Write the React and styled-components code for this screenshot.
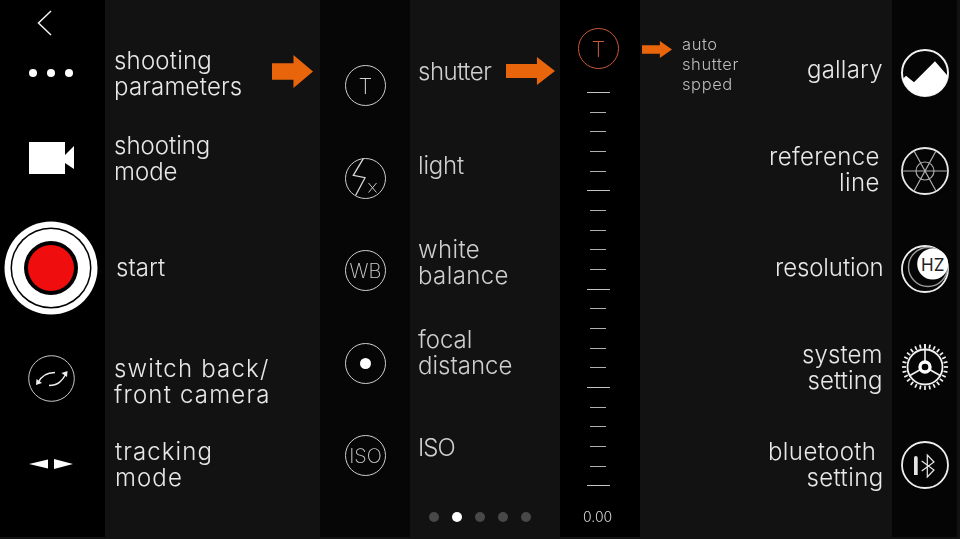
import React from 'react'
import styled, { createGlobalStyle } from 'styled-components'

const TICKS = Array.from({ length: 21 }, (_, i) => i)
const GEAR_TICKS = Array.from({ length: 28 }, (_, i) => (i * 360) / 28)

function App() {
    return (
        <Page>
            <GlobalStyle />
            <Rail $w={105} $bg={'#000'} $pad={3}>
                <Slot $h={46}><Chevron /></Slot>
                <Slot $h={54}><MoreDots /></Slot>
                <Slot $h={116}><Camera /></Slot>
                <Slot $h={104}><RecordButton /></Slot>
                <Slot $h={116}><SwitchIcon /></Slot>
                <Slot $h={56}><TrackingIcon /></Slot>
            </Rail>

            <Panel $w={215} $pad={9}>
                <Slot $h={86} $between>
                    <Label>shooting<br />parameters</Label>
                    <Arrow $w={41} $h={33} $head={22} $lift={4} $right={7} />
                </Slot>
                <Slot $h={84}><Label $track={0}>shooting<br />mode</Label></Slot>
                <Slot $h={134}><Label $indent={2} $track={0}>start</Label></Slot>
                <Slot $h={94}><Label $track={1.2}>switch back/<br />front camera</Label></Slot>
                <Slot $h={72}><Label $indent={1} $track={1.1}>tracking<br />mode</Label></Slot>
            </Panel>

            <IconRail $w={90} $bg={'#060606'} $top={65} $gap={51.5}>
                <Badge>T</Badge>
                <Badge><FlashIcon /></Badge>
                <Badge $small>WB</Badge>
                <Badge><FocusDot /></Badge>
                <Badge $small>ISO</Badge>
            </IconRail>

            <Panel $w={150} $pad={8}>
                <Slot $h={82} $between>
                    <Label $dim $track={-0.5}>shutter</Label>
                    <Arrow $w={49} $h={28} $head={26.5} $right={5} />
                </Slot>
                <Slot $h={106}><Label $dim $track={-0.2}>light</Label></Slot>
                <Slot $h={88}><Label $dim $track={0.4}>white<br />balance</Label></Slot>
                <Slot $h={92}><Label $dim $track={0}>focal<br />distance</Label></Slot>
                <Slot $h={98}><Label $dim $track={-1}>ISO</Label></Slot>
                <Pager>
                    {[0, 1, 2, 3, 4].map((i) => <PagerDot key={i} $on={i === 1} />)}
                </Pager>
            </Panel>

            <Scale>
                <Badge $orange>T</Badge>
                <Ticks>
                    {TICKS.map((i) => <Tick key={i} $long={i % 5 === 0} />)}
                </Ticks>
                <ScaleValue>0.00</ScaleValue>
            </Scale>

            <Panel $w={252} $row>
                <AutoBlock>
                    <Arrow $w={30} $h={17} $head={25} />
                    <SmallLabel>auto<br />shutter<br />spped</SmallLabel>
                </AutoBlock>
                <RightLabels>
                    <Slot $h={78}><Label $right $track={0.2}>gallary</Label></Slot>
                    <Slot $h={122}><Label $right $end={3} $track={0.4}>reference<br />line</Label></Slot>
                    <Slot $h={74}><Label $right $end={-1} $track={-0.1}>resolution</Label></Slot>
                    <Slot $h={126}><Label $right $track={0.1}>system<br />setting</Label></Slot>
                    <Slot $h={68}><Label $right $end={-1} $track={0.4}>bluetooth&nbsp;<br />setting</Label></Slot>
                </RightLabels>
            </Panel>

            <IconRail $w={65} $bg={'#050505'} $top={49} $gap={50}>
                <GalleryIcon />
                <ReferenceIcon />
                <HzIcon />
                <GearIcon />
                <BluetoothIcon />
            </IconRail>
        </Page>
    )
}

export default App

function Arrow({ $w, $h, $head, $lift, $right }) {
    return (
        <ArrowSvg viewBox="0 0 42 36" preserveAspectRatio="none" width={$w} height={$h} $lift={$lift} $right={$right}>
            <path d={`M0 9H${$head}V0L42 18L${$head} 36V27H0Z`} fill="#e8650c" />
        </ArrowSvg>
    )
}

function Chevron() {
    return (
        <ChevronSvg width="15" height="26" viewBox="0 0 15 26">
            <path d="M14 1L1.5 13L14 25" fill="none" stroke="#f2f2f2" strokeWidth="1.5" />
        </ChevronSvg>
    )
}

function MoreDots() {
    return (
        <svg width="46" height="10" viewBox="0 0 46 10">
            <circle cx="5" cy="5" r="4" fill="#fff" />
            <circle cx="23" cy="5" r="4" fill="#fff" />
            <circle cx="41" cy="5" r="4" fill="#fff" />
        </svg>
    )
}

function Camera() {
    return (
        <svg width="48" height="32" viewBox="-2 0 48 32">
            <rect x="0" y="0" width="36" height="32" fill="#fff" />
            <path d="M36 13L45 4V27L36 21Z" fill="#fff" />
        </svg>
    )
}

function SwitchIcon() {
    return (
        <svg width="47" height="47" viewBox="0 0 47 47">
            <circle cx="23.5" cy="23.5" r="22.8" fill="none" stroke="#c8c8c8" strokeWidth="1" />
            <path d="M10 28C13 21 18 17.5 27 17.5M21 30.5C30 30.5 34 26 38 19" fill="none" stroke="#eee" strokeWidth="1.5" />
            <path d="M8 30L8.5 24L14 28Z" fill="#eee" />
            <path d="M39.5 16L33.5 18L39 22Z" fill="#eee" />
        </svg>
    )
}

function TrackingIcon() {
    return (
        <svg width="44" height="10" viewBox="0 0 44 10">
            <path d="M0 5L19 0.5V9.5Z" fill="#fff" />
            <path d="M25 0V10L44 5Z" fill="#fff" />
        </svg>
    )
}

function FlashIcon() {
    return (
        <IconSvg width="41" height="41" viewBox="0 0 41 41">
            <path d="M18.3 0.7L8.3 17.3L20 19.7L10.7 37.3" fill="none" stroke="#d8d8d8" strokeWidth="1.3" />
            <path d="M23.5 25L31.5 34.5M31.5 25L23.5 34.5" fill="none" stroke="#c8c8c8" strokeWidth="1" />
        </IconSvg>
    )
}

function GalleryIcon() {
    return (
        <svg width="48" height="48" viewBox="0 0 48 48">
            <circle cx="24" cy="24" r="23" fill="none" stroke="#f2f2f2" strokeWidth="2" />
            <path d="M1.8 30L5 26.7L13 33.3L34 12.3L46.8 27A23 23 0 0 1 1.8 30Z" fill="#fff" />
        </svg>
    )
}

function ReferenceIcon() {
    return (
        <svg width="48" height="48" viewBox="0 0 48 48">
            <circle cx="24" cy="24" r="23" fill="none" stroke="#e8e8e8" strokeWidth="1.8" />
            <circle cx="24" cy="24" r="9" fill="none" stroke="#a8a8a8" strokeWidth="1.2" />
            <path d="M1 24H47M13 4L35 44M35 4L13 44" fill="none" stroke="#b0b0b0" strokeWidth="1.2" />
        </svg>
    )
}

function HzIcon() {
    return (
        <svg width="48" height="48" viewBox="0 0 48 48">
            <circle cx="24" cy="24" r="23" fill="none" stroke="#eee" strokeWidth="1.8" />
            <circle cx="27" cy="22" r="19.5" fill="none" stroke="#9a9a9a" strokeWidth="1.4" />
            <circle cx="31.7" cy="19" r="15.5" fill="#fff" />
            <HzText x="31.7" y="25.5" textAnchor="middle">HZ</HzText>
        </svg>
    )
}

function GearIcon() {
    return (
        <svg width="48" height="48" viewBox="0 0 48 48">
            {GEAR_TICKS.map((a) => (
                <path key={a} d="M24 1V5" stroke="#f2f2f2" strokeWidth="1.7" transform={`rotate(${a} 24 24)`} />
            ))}
            <circle cx="24" cy="24" r="17.5" fill="none" stroke="#f2f2f2" strokeWidth="1.8" />
            <path d="M24 1V20M24 24L8 33M24 24L40 33" fill="none" stroke="#f2f2f2" strokeWidth="1.6" />
            <circle cx="24" cy="24" r="5" fill="#000" stroke="#fff" strokeWidth="3.4" />
        </svg>
    )
}

function BluetoothIcon() {
    return (
        <svg width="48" height="48" viewBox="0 0 48 48">
            <circle cx="24" cy="24" r="23" fill="none" stroke="#eee" strokeWidth="1.8" />
            <path d="M13 17Q13 15 14.8 15Q16.7 15 16.7 17V34H13Z" fill="#e4e4e4" />
            <path d="M20.7 20L33 29L26.3 36V14L33 21L20.7 30" fill="none" stroke="#e8e8e8" strokeWidth="1.2" />
        </svg>
    )
}

const GlobalStyle = createGlobalStyle`
    html, body {
        margin: 0;
        padding: 0;
        background: #121212;
    }
`

const Page = styled.div`
    display: flex;
    width: 960px;
    height: 539px;
    overflow: hidden;
    background: #121212;
    font-family: 'Inter', 'Liberation Sans', sans-serif;
    font-weight: 300;
`

const Rail = styled.div`
    width: ${(props) => props.$w}px;
    height: 537px;
    flex: none;
    box-sizing: border-box;
    padding-right: ${(props) => props.$pad || 0}px;
    background: ${(props) => props.$bg};
    display: flex;
    flex-direction: column;
    align-items: center;
`

const IconRail = styled(Rail)`
    padding-top: ${(props) => props.$top}px;
    gap: ${(props) => props.$gap}px;
`

const Panel = styled.div`
    width: ${(props) => props.$w}px;
    flex: none;
    box-sizing: border-box;
    padding-top: 30px;
    padding-left: ${(props) => props.$pad || 0}px;
    display: flex;
    flex-direction: ${(props) => (props.$row ? 'row' : 'column')};
    justify-content: ${(props) => (props.$row ? 'space-between' : 'flex-start')};
`

const Slot = styled.div`
    height: ${(props) => props.$h}px;
    width: 100%;
    display: flex;
    align-items: center;
    justify-content: ${(props) => (props.$between ? 'space-between' : 'center')};
    ${Panel} & {
        justify-content: ${(props) => (props.$between ? 'space-between' : 'flex-start')};
    }
`

const Label = styled.div`
    font-size: 24px;
    line-height: 26px;
    letter-spacing: ${(props) => props.$track ?? 0.2}px;
    white-space: nowrap;
    will-change: transform;
    color: ${(props) => (props.$dim ? '#cfcfcf' : '#e8e8e8')};
    margin-top: 1px;
    margin-left: ${(props) => props.$indent || 0}px;
    text-align: ${(props) => (props.$right ? 'right' : 'left')};
    margin-right: ${(props) => props.$end || 0}px;
`

const SmallLabel = styled.div`
    font-size: 16.5px;
    line-height: 20px;
    letter-spacing: 0.6px;
    will-change: transform;
    color: #bdbdbd;
    margin-left: 10px;
    margin-top: 4px;
`

const ArrowSvg = styled.svg`
    flex: none;
    margin-top: ${(props) => (props.$lift || 0) * -1}px;
    margin-right: ${(props) => props.$right || 0}px;
`

const ChevronSvg = styled.svg`
    margin-right: 13px;
`

const AutoBlock = styled.div`
    display: flex;
    align-items: flex-start;
    padding-left: 2px;
    ${ArrowSvg} {
        margin-top: 11px;
    }
`

const RightLabels = styled.div`
    width: 170px;
    padding-right: 9px;
    display: flex;
    flex-direction: column;
    ${Panel} & ${Slot} {
        justify-content: flex-end;
    }
`

const Badge = styled.div`
    position: relative;
    width: 41px;
    height: 41px;
    flex: none;
    box-sizing: border-box;
    border: 1.2px solid ${(props) => (props.$orange ? '#c8593a' : '#d0d0d0')};
    border-radius: 50%;
    display: flex;
    align-items: center;
    justify-content: center;
    will-change: transform;
    color: ${(props) => (props.$orange ? '#c8593a' : '#d0d0d0')};
    font-weight: 200;
    font-size: ${(props) => (props.$small ? 20 : 22)}px;
`

const IconSvg = styled.svg`
    position: absolute;
    left: -1px;
    top: -1px;
`

const FocusDot = styled.span`
    width: 11px;
    height: 11px;
    border-radius: 50%;
    background: #fff;
`

const RecordButton = styled.div`
    width: 46px;
    height: 46px;
    border-radius: 50%;
    background: #f00d0d;
    box-shadow:
        0 0 0 4px #000,
        0 0 0 16px #fff,
        0 0 0 17.5px #000,
        0 0 0 23.5px #fff;
`

const Pager = styled.div`
    display: flex;
    gap: 13px;
    padding: 16px 0 0 11px;
`

const PagerDot = styled.span`
    width: 10px;
    height: 10px;
    border-radius: 50%;
    background: ${(props) => (props.$on ? '#fff' : '#484848')};
`

const Scale = styled.div`
    width: 80px;
    height: 537px;
    flex: none;
    background: #000;
    box-sizing: border-box;
    padding: 28px 4px 0 0;
    display: flex;
    flex-direction: column;
    align-items: center;
`

const Ticks = styled.div`
    margin-top: 23px;
    display: flex;
    flex-direction: column;
    align-items: center;
    gap: 18.68px;
`

const Tick = styled.span`
    display: block;
    width: ${(props) => (props.$long ? 23 : 16)}px;
    height: 1px;
    background: ${(props) => (props.$long ? '#c4c4c4' : '#b0b0b0')};
`

const ScaleValue = styled.div`
    margin-top: 23px;
    font-size: 14px;
    line-height: 16px;
    will-change: transform;
    color: #d8d8d8;
`

const HzText = styled.text`
    font-size: 17px;
    font-weight: 400;
    fill: #222;
    font-family: 'Inter', 'Liberation Sans', sans-serif;
`
